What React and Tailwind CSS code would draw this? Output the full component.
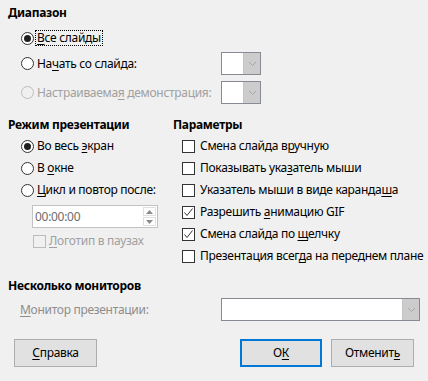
import React from "react";

const U = ({ children }) => (
  <span className="underline underline-offset-[2px] decoration-1">{children}</span>
);

function Radio({ checked, disabled }) {
  return (
    <span
      className={`relative inline-flex items-center justify-center w-[13px] h-[13px] rounded-full border shrink-0 ${
        disabled ? "border-[#bcbcbc] bg-[#f0f0f0]" : "border-[#333333] bg-white"
      }`}
    >
      {checked && <span className="w-[7px] h-[7px] rounded-full bg-[#1f1f1f]" />}
    </span>
  );
}

function Check({ checked, disabled }) {
  return (
    <span
      className={`inline-flex items-center justify-center w-[13px] h-[13px] border shrink-0 ${
        disabled ? "border-[#bcbcbc] bg-[#f0f0f0]" : "border-[#333333] bg-white"
      }`}
    >
      {checked && (
        <svg width="11" height="11" viewBox="0 0 11 11">
          <polyline points="1.5,5.5 4,8.5 9.5,1.5" fill="none" stroke="#333" strokeWidth="1" />
        </svg>
      )}
    </span>
  );
}

function Chevron() {
  return (
    <svg width="9" height="6" viewBox="0 0 9 6">
      <polyline points="1,1 4.5,4.5 8,1" fill="none" stroke="#a6a6a6" strokeWidth="1" />
    </svg>
  );
}

function SmallCombo() {
  return (
    <div className="flex w-[40px] h-[23px] border border-[#868a92] bg-white">
      <div className="flex-1 bg-white" />
      <div className="w-[17px] h-full bg-[#cccccc] border-l border-[#c4c4c4] flex items-center justify-center">
        <Chevron />
      </div>
    </div>
  );
}

function Btn({ children, primary, w }) {
  return (
    <div
      className={`h-[28px] flex items-center justify-center bg-[#e1e1e1] ${w} ${
        primary ? "border-2 border-[#0078d7]" : "border border-[#adadad]"
      }`}
    >
      {children}
    </div>
  );
}

export default function App() {
  return (
    <div
      className="w-[428px] h-[381px] bg-[#f0f0f0] text-black text-[12px] leading-[16px] tracking-[-0.3px] overflow-hidden flex flex-col pl-[8px]"
      style={{ fontFamily: '"Noto Sans", "Open Sans", sans-serif' }}
    >
      {/* Диапазон */}
      <div className="mt-[5px] h-[16px] font-bold flex items-center">Диапазон</div>
      <div className="mt-[6px] h-[22px] flex items-center pl-[13px]">
        <Radio checked />
        <span className="ml-[2px] px-[1px] outline outline-1 outline-dotted outline-black leading-[14px]">
          <U>В</U>се слайды
        </span>
      </div>
      <div className="mt-[3px] h-[23px] flex items-center pl-[13px]">
        <Radio />
        <span className="ml-[3px] w-[184px]">
          На<U>ч</U>ать со слайда:
        </span>
        <SmallCombo />
      </div>
      <div className="mt-[6px] h-[23px] flex items-center pl-[13px]">
        <Radio disabled />
        <span className="ml-[3px] w-[184px] text-[#a0a0a0]">
          Настраиваема<U>я</U> демонстрация:
        </span>
        <SmallCombo />
      </div>

      {/* Two columns */}
      <div className="mt-[11px] flex">
        <div className="w-[165px] flex flex-col">
          <div className="h-[20px] font-bold flex items-center">Режим презентации</div>
          <div className="h-[22px] flex items-center pl-[13px]">
            <Radio checked />
            <span className="ml-[3px]">
              Во весь <U>э</U>кран
            </span>
          </div>
          <div className="h-[22px] flex items-center pl-[13px]">
            <Radio />
            <span className="ml-[3px]">
              В <U>о</U>кне
            </span>
          </div>
          <div className="h-[22px] flex items-center pl-[13px]">
            <Radio />
            <span className="ml-[3px]">
              <U>Ц</U>икл и повтор после:
            </span>
          </div>
          <div className="mt-[4px] ml-[24px] w-[126px] h-[23px] border border-[#c2c2c2] bg-white flex items-center">
            <span className="flex-1 pl-[2px] text-[#6d6d6d]">00:00:00</span>
            <div className="w-[15px] h-full flex flex-col items-center justify-center gap-[1px] pr-[1px]">
              <div className="w-[13px] h-[9px] border border-[#e0e0e0] flex items-center justify-center">
                <svg width="7" height="4" viewBox="0 0 7 4">
                  <polygon points="0,4 3.5,0 7,4" fill="#8a8a8a" />
                </svg>
              </div>
              <div className="w-[13px] h-[9px] border border-[#e0e0e0] flex items-center justify-center">
                <svg width="7" height="4" viewBox="0 0 7 4">
                  <polygon points="0,0 3.5,4 7,0" fill="#8a8a8a" />
                </svg>
              </div>
            </div>
          </div>
          <div className="mt-[2px] h-[22px] flex items-center pl-[25px]">
            <Check disabled />
            <span className="ml-[3px] text-[#a0a0a0]">
              <U>Л</U>оготип в паузах
            </span>
          </div>
        </div>

        <div className="flex-1 flex flex-col">
          <div className="h-[20px] font-bold flex items-center">Параметры</div>
          {[
            [false, <>Смена слайда в<U>р</U>учную</>],
            [false, <>Показывать ука<U>з</U>атель мыши</>],
            [false, <>Указатель мыши в виде каранда<U>ш</U>а</>],
            [true, <>Разрешить <U>а</U>нимацию GIF</>],
            [true, <>Смена слайда по <U>щ</U>елчку</>],
            [false, <>Презентация всег<U>д</U>а на переднем плане</>],
          ].map(([c, label], i) => (
            <div key={i} className="h-[22px] flex items-center pl-[9px]">
              <Check checked={c} />
              <span className="ml-[5px] whitespace-nowrap">{label}</span>
            </div>
          ))}
        </div>
      </div>

      {/* Несколько мониторов */}
      <div className="mt-[9px] h-[20px] font-bold flex items-center">Несколько мониторов</div>
      <div className="mt-[2px] h-[23px] flex items-center pl-[12px]">
        <span className="w-[201px] text-[#8d8d8d]">
          <U>М</U>онитор презентации:
        </span>
        <div className="flex w-[199px] h-[23px] border border-[#868a92] bg-white">
          <div className="flex-1" />
          <div className="w-[17px] h-full bg-[#cccccc] border-l border-[#c4c4c4] flex items-center justify-center">
            <Chevron />
          </div>
        </div>
      </div>

      {/* Buttons */}
      <div className="mt-[18px] flex items-center pl-[6px] pr-[14px]">
        <Btn w="w-[83px]">
          <span>
            <U>С</U>правка
          </span>
        </Btn>
        <div className="flex-1" />
        <Btn primary w="w-[82px]">
          <span>
            О<U>К</U>
          </span>
        </Btn>
        <div className="w-[9px]" />
        <Btn w="w-[83px]">
          <span>
            Отменит<U>ь</U>
          </span>
        </Btn>
      </div>
    </div>
  );
}
